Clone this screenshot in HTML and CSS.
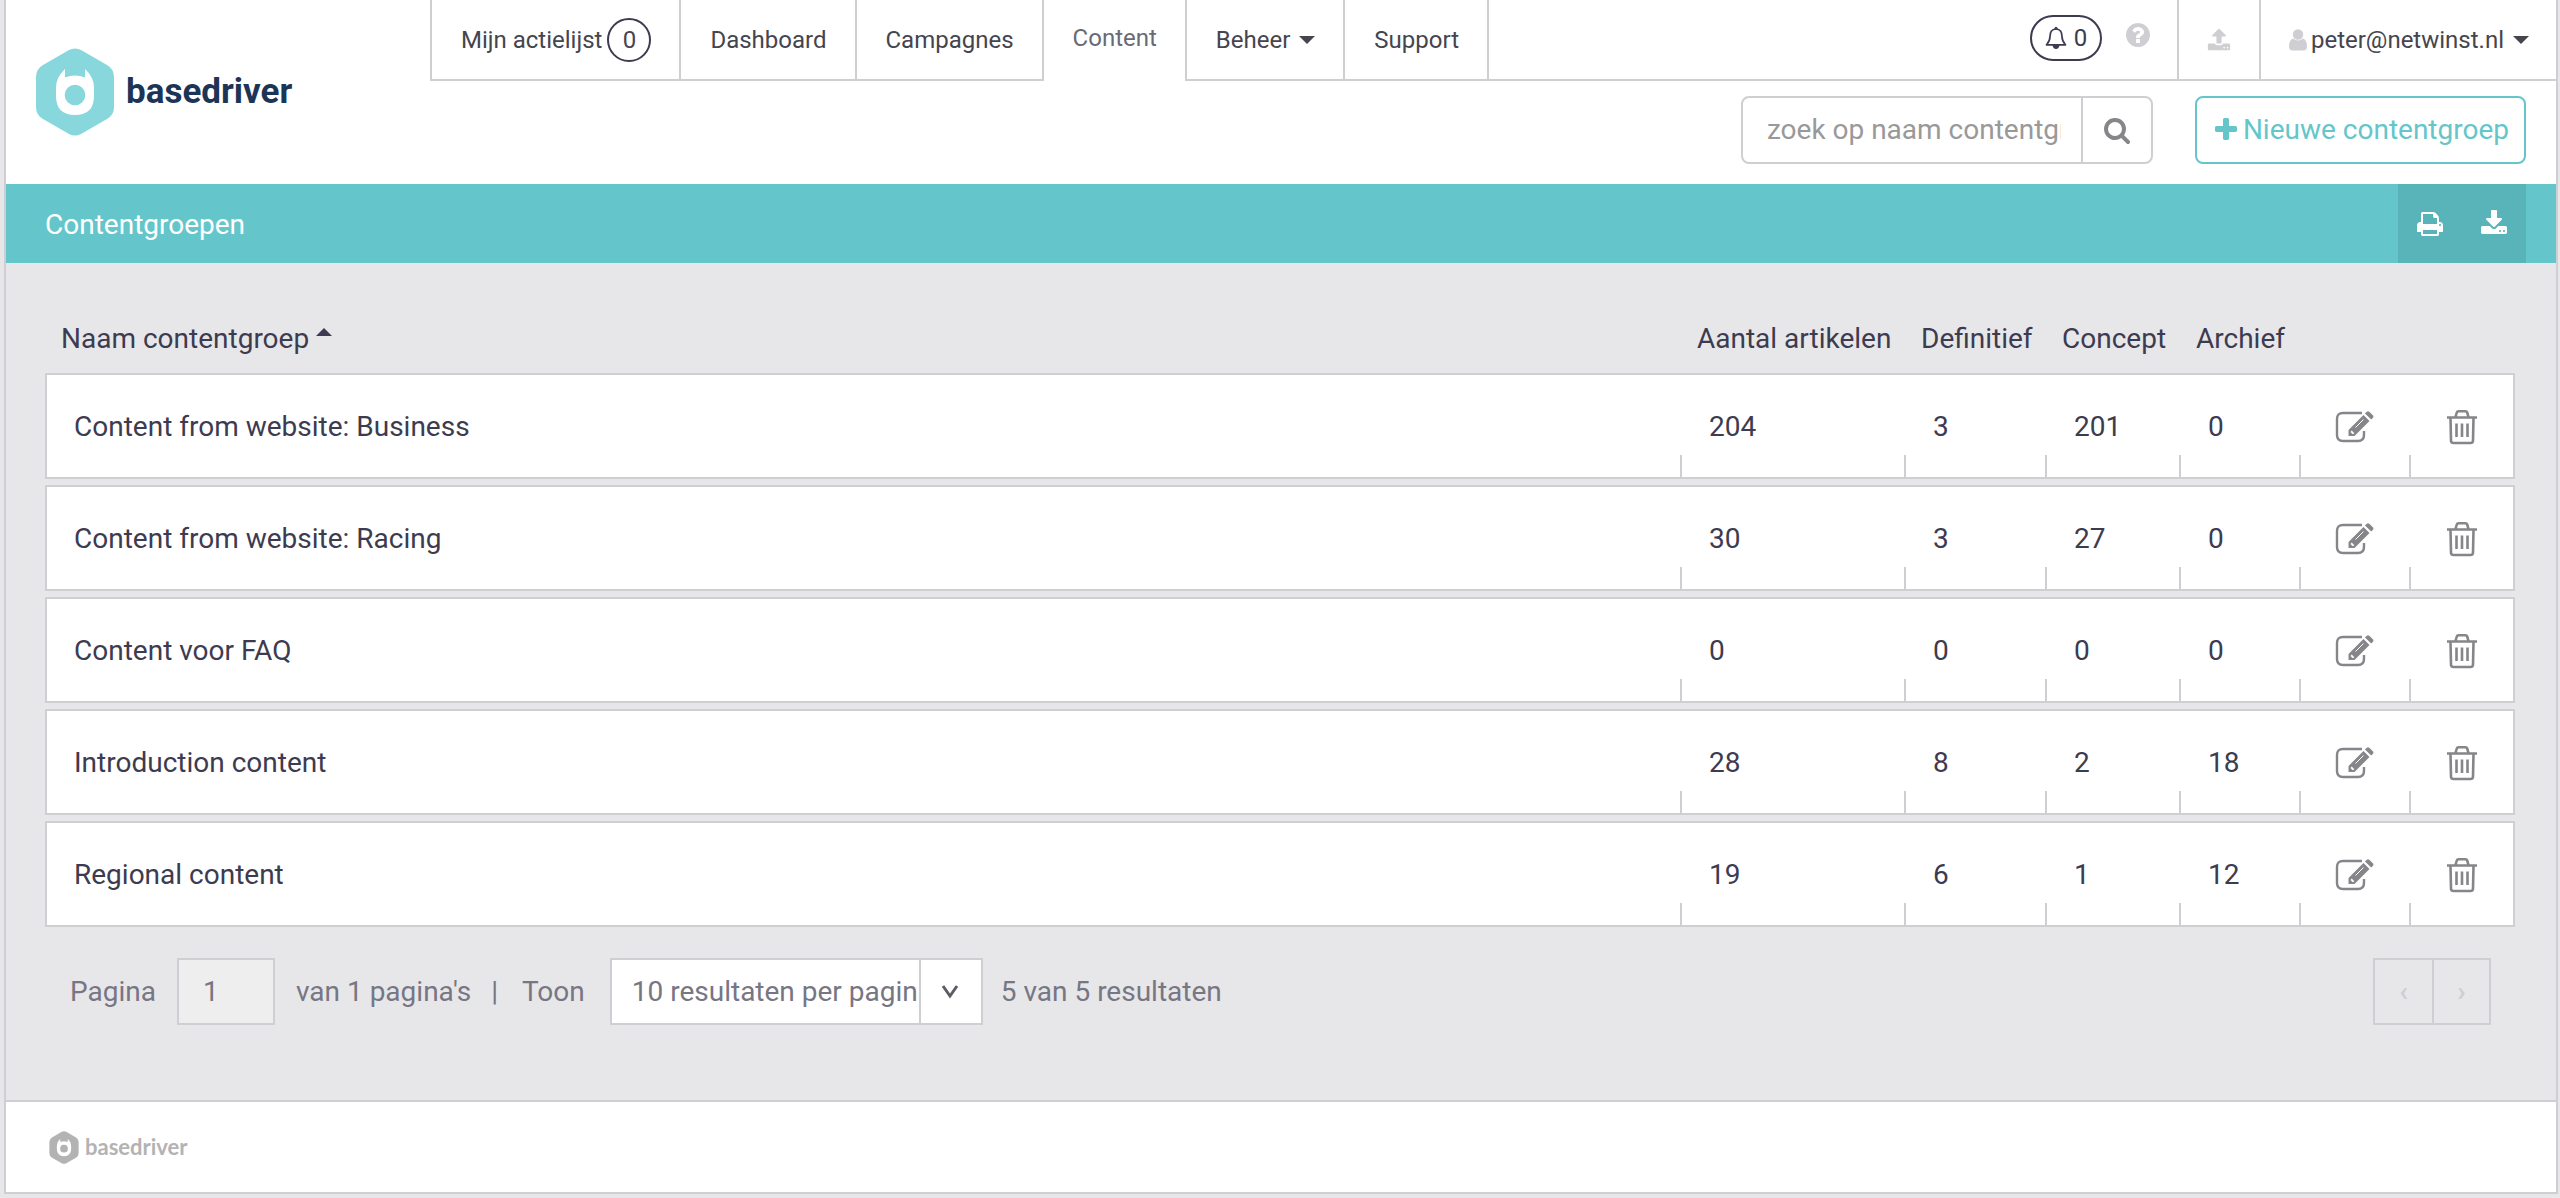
FILE: index.html
```html
<!DOCTYPE html>
<html lang="nl">
<head>
<meta charset="utf-8">
<title>Contentgroepen - basedriver</title>
<link rel="stylesheet" href="styles.css">
</head>
<body>
<svg class="defs" aria-hidden="true">
  <symbol id="plus" viewBox="0 0 1792 1792"><path d="M1600 736v192q0 40-28 68t-68 28h-416v416q0 40-28 68t-68 28h-192q-40 0-68-28t-28-68v-416h-416q-40 0-68-28t-28-68v-192q0-40 28-68t68-28h416v-416q0-40 28-68t68-28h192q40 0 68 28t28 68v416h416q40 0 68 28t28 68z"/></symbol>
  <symbol id="search" viewBox="0 0 1792 1792"><path d="M1216 832q0-185-131.500-316.500t-316.500-131.500-316.500 131.500-131.500 316.500 131.500 316.500 316.500 131.500 316.500-131.500 131.500-316.500zm512 832q0 52-38 90t-90 38q-54 0-90-38l-343-342q-179 124-399 124-143 0-273.500-55.500t-225-150-150-225-55.500-273.500 55.500-273.500 150-225 225-150 273.500-55.500 273.500 55.500 225 150 150 225 55.500 273.500q0 220-124 399l343 343q37 37 37 90z"/></symbol>
  <symbol id="download" viewBox="0 0 1792 1792"><path d="M1344 1344q0-26-19-45t-45-19-45 19-19 45 19 45 45 19 45-19 19-45zm256 0q0-26-19-45t-45-19-45 19-19 45 19 45 45 19 45-19 19-45zm128-224v320q0 40-28 68t-68 28h-1472q-40 0-68-28t-28-68v-320q0-40 28-68t68-28h465l135 136q58 56 136 56t136-56l136-136h464q40 0 68 28t28 68zm-325-569q17 41-14 70l-448 448q-18 19-45 19t-45-19l-448-448q-31-29-14-70 17-39 59-39h256v-448q0-26 19-45t45-19h256q26 0 45 19t19 45v448h256q42 0 59 39z"/></symbol>
  <symbol id="upload" viewBox="0 0 1792 1792"><path d="M1344 1472q0-26-19-45t-45-19-45 19-19 45 19 45 45 19 45-19 19-45zm256 0q0-26-19-45t-45-19-45 19-19 45 19 45 45 19 45-19 19-45zm128-224v320q0 40-28 68t-68 28h-1472q-40 0-68-28t-28-68v-320q0-40 28-68t68-28h427q21 56 70.500 92t110.500 36h256q61 0 110.500-36t70.500-92h427q40 0 68 28t28 68zm-325-648q-17 40-59 40h-256v448q0 26-19 45t-45 19h-256q-26 0-45-19t-19-45v-448h-256q-42 0-59-40-17-39 14-69l448-448q18-19 45-19t45 19l448 448q31 30 14 69z"/></symbol>
  <symbol id="question" viewBox="0 0 1792 1792"><path d="M1024 1376v-192q0-14-9-23t-23-9h-192q-14 0-23 9t-9 23v192q0 14 9 23t23 9h192q14 0 23-9t9-23zm256-672q0-88-55.500-163t-138.500-116-170-41q-243 0-371 213-15 24 8 42l132 100q7 6 19 6 16 0 25-12 53-68 86-92 34-24 86-24 48 0 85.500 26t37.500 59q0 38-20 61t-68 45q-63 28-115.500 86.500t-52.500 125.500v36q0 14 9 23t23 9h192q14 0 23-9t9-23q0-19 21.500-49.500t54.500-49.500q32-18 49-28.500t46-35 44.500-48 28-60.500 12.500-81zm384 192q0 209-103 385.500t-279.500 279.500-385.500 103-385.500-103-279.500-279.500-103-385.500 103-385.500 279.500-279.500 385.500-103 385.500 103 279.500 279.500 103 385.500z"/></symbol>
  <symbol id="print" viewBox="0 0 1792 1792"><path d="M448 1536h896v-256h-896v256zm0-640h896v-384h-160q-40 0-68-28t-28-68v-160h-640v640zm1152 64q0-26-19-45t-45-19-45 19-19 45 19 45 45 19 45-19 19-45zm128 0v416q0 13-9.500 22.500t-22.500 9.500h-224v160q0 40-28 68t-68 28h-960q-40 0-68-28t-28-68v-160h-224q-13 0-22.500-9.500t-9.500-22.500v-416q0-79 56.500-135.500t135.500-56.500h64v-544q0-40 28-68t68-28h672q40 0 88 20t76 48l152 152q28 28 48 76t20 88v256h64q79 0 135.500 56.500t56.500 135.500z"/></symbol>
  <symbol id="user" viewBox="0 0 18 22"><circle cx="9" cy="5.500" r="5.200"/><path d="M4 9.500Q9 13.500 14 9.500Q18 11 18 17.500Q18 21.500 14.500 21.500H3.500Q0 21.500 0 17.500Q0 11 4 9.500z"/></symbol>
  <symbol id="bell" viewBox="0 0 22 24"><path d="M11 3C6.500 3 5 6.500 5 10.500C5 15 3.500 16.500 1.500 18.800H20.500C18.500 16.500 17 15 17 10.500C17 6.500 15.500 3 11 3z" fill="none" stroke="currentColor" stroke-width="1.700" stroke-linejoin="round"/><circle cx="11" cy="2.200" r="1.500"/><path d="M7.500 19H14.500Q14 23 11 23Q8 23 7.500 19z"/></symbol>
  <symbol id="edit" viewBox="0 0 40 32"><path d="M27 2H8Q2 2 2 8V24Q2 30 8 30H23Q29 30 29 24V20" fill="none" stroke="currentColor" stroke-width="2.400"/><path d="M14 18.500L28.500 4L34.500 10L20 24.500Q19.400 25 18.500 25H14Q13.500 25 13.500 24.500V20Q13.500 19 14 18.500z"/><path d="M30 2.500L31.500 1Q33 -.3 34.500 1L37.800 4.300Q39 5.500 37.800 7L36.200 8.500z"/><path d="M16.800 19.600L19.300 22.200L17.800 23.200L15.500 21z" fill="#fff"/><path d="M20.500 16.500L28.500 8.500" stroke="#fff" stroke-width="1"/></symbol>
  <symbol id="trash" viewBox="0 0 32 36"><g fill="none" stroke="currentColor" stroke-width="2.600"><path d="M1 8.500H31M9.500 8L10.800 3.500Q11.200 2.200 12.600 2.200H19.400Q20.800 2.200 21.200 3.500L22.500 8M4.500 9L5 31.500Q5 34 7.500 34H24.500Q27 34 27 31.500L27.500 9"/><path d="M10.500 14.500V28M16 14.500V28M21.500 14.500V28"/></g></symbol>
  <symbol id="mark" viewBox="0 0 78 88"><path d="M33 2Q39-1.200 45 2L71 17Q78 21 78 29V59Q78 67 71 71L45 86Q39 89.200 33 86L7 71Q0 67 0 59V29Q0 21 7 17z"/><path d="M29 21V29.500Q39 25.500 49 29.500V21Q58 29 58 40V48Q58 67 39 67Q20 67 20 48V40Q20 29 29 21z" fill="#fff"/><circle cx="39" cy="47" r="10.300"/></symbol>
</svg>

<div class="frame">
  <header class="header">
    <a class="brand" href="#"><svg class="brand-mark"><use href="#mark"/></svg><span>basedriver</span></a>
    <div class="header-main">
      <div class="topbar">
        <nav class="nav">
          <a class="nav-item" href="#">Mijn actielijst <span class="count">0</span></a>
          <a class="nav-item" href="#">Dashboard</a>
          <a class="nav-item" href="#">Campagnes</a>
          <a class="nav-item active" href="#">Content</a>
          <a class="nav-item" href="#">Beheer <i class="caret"></i></a>
          <a class="nav-item" href="#">Support</a>
        </nav>
        <div class="tools">
          <a class="pill" href="#"><svg class="bell"><use href="#bell"/></svg>0</a>
          <a class="help" href="#" aria-label="Help"><svg class="icon"><use href="#question"/></svg></a>
        </div>
        <a class="nav-item upload" href="#" aria-label="Upload"><svg class="icon-small"><use href="#upload"/></svg></a>
        <a class="nav-item account" href="#"><svg class="user"><use href="#user"/></svg>peter@netwinst.nl <i class="caret"></i></a>
      </div>
      <div class="actions">
        <form class="search">
          <input type="text" aria-label="Zoeken" placeholder="zoek op naam contentgroep">
          <button type="button" aria-label="Zoek"><svg class="icon"><use href="#search"/></svg></button>
        </form>
        <button class="new" type="button"><svg class="icon"><use href="#plus"/></svg>Nieuwe contentgroep</button>
      </div>
    </div>
  </header>

  <div class="titlebar">
    <h1>Contentgroepen</h1>
    <div class="export">
      <a href="#" aria-label="Print"><svg class="icon"><use href="#print"/></svg></a>
      <a href="#" aria-label="Download"><svg class="icon"><use href="#download"/></svg></a>
    </div>
  </div>

  <main class="content">
    <table class="groups">
      <colgroup><col><col class="c-total"><col class="c-final"><col class="c-draft"><col class="c-archive"><col class="c-edit"><col class="c-delete"></colgroup>
      <thead>
        <tr><th>Naam contentgroep <i class="sort"></i></th><th>Aantal artikelen</th><th>Definitief</th><th>Concept</th><th>Archief</th><th></th><th></th></tr>
      </thead>
      <tbody>
        <tr><td>Content from website: Business</td><td>204</td><td>3</td><td>201</td><td>0</td><td class="act"><a href="#" aria-label="Bewerken"><svg class="edit"><use href="#edit"/></svg></a></td><td class="act"><a href="#" aria-label="Verwijderen"><svg class="trash"><use href="#trash"/></svg></a></td></tr>
        <tr><td>Content from website: Racing</td><td>30</td><td>3</td><td>27</td><td>0</td><td class="act"><a href="#" aria-label="Bewerken"><svg class="edit"><use href="#edit"/></svg></a></td><td class="act"><a href="#" aria-label="Verwijderen"><svg class="trash"><use href="#trash"/></svg></a></td></tr>
        <tr><td>Content voor FAQ</td><td>0</td><td>0</td><td>0</td><td>0</td><td class="act"><a href="#" aria-label="Bewerken"><svg class="edit"><use href="#edit"/></svg></a></td><td class="act"><a href="#" aria-label="Verwijderen"><svg class="trash"><use href="#trash"/></svg></a></td></tr>
        <tr><td>Introduction content</td><td>28</td><td>8</td><td>2</td><td>18</td><td class="act"><a href="#" aria-label="Bewerken"><svg class="edit"><use href="#edit"/></svg></a></td><td class="act"><a href="#" aria-label="Verwijderen"><svg class="trash"><use href="#trash"/></svg></a></td></tr>
        <tr><td>Regional content</td><td>19</td><td>6</td><td>1</td><td>12</td><td class="act"><a href="#" aria-label="Bewerken"><svg class="edit"><use href="#edit"/></svg></a></td><td class="act"><a href="#" aria-label="Verwijderen"><svg class="trash"><use href="#trash"/></svg></a></td></tr>
      </tbody>
    </table>

    <div class="pagination">
      <label for="page">Pagina</label>
      <input class="page" id="page" type="text" value="1" disabled>
      <span>van 1 pagina's</span>
      <span class="bar">|</span>
      <label for="size">Toon</label>
      <div class="size">
        <select id="size"><option>10 resultaten per pagina</option><option>25 resultaten per pagina</option></select>
        <svg class="chevron" viewBox="0 0 18 16"><path d="M2 2L9 12L16 2" fill="none" stroke="currentColor" stroke-width="3"/></svg>
      </div>
      <span>5 van 5 resultaten</span>
      <div class="pager"><button type="button" disabled>‹</button><button type="button" disabled>›</button></div>
    </div>
  </main>

  <footer class="footer"><svg class="footer-mark"><use href="#mark"/></svg><span>basedriver</span></footer>
</div>
</body>
</html>
```
FILE: styles.css
```css
* { box-sizing: border-box; }
body { margin: 0; background: #e7e7e9; color: #3d3b50; font: 28px/32px Roboto, sans-serif; }
a { color: inherit; text-decoration: none; }
button, input, select { margin: 0; font: inherit; color: inherit; border-radius: 0; }
svg { display: block; flex: none; fill: currentColor; }
.defs { position: absolute; width: 0; height: 0; }
.icon { width: 28px; height: 28px; }
.icon-small { width: 24px; height: 24px; }

.frame { margin: 0 2px 4px 4px; border: 2px solid #cfced3; border-top: 0; }

/* Header */
.header { display: flex; height: 184px; background: #fff; }
.brand { display: flex; flex: none; gap: 12px; align-items: center; width: 424px; padding-left: 30px; color: #1c3557; font-size: 35px; font-weight: 700; }
.brand-mark { width: 78px; height: 88px; color: #87d7dc; }
.header-main { flex: 1; }
.topbar { display: flex; height: 81px; color: #45454e; font-size: 24px; line-height: 28px; }
.nav { display: flex; }
.nav-item { display: flex; align-items: center; padding: 0 28px 0 29px; border: solid #cfced3; border-width: 0 0 2px 2px; white-space: nowrap; }
.nav-item.active { padding-bottom: 6px; border-bottom: 0; color: #6a6a75; }
.count { display: grid; place-items: center; width: 44px; height: 44px; margin-left: 5px; border: 2px solid #3d3b50; border-radius: 50%; }
.caret { margin-left: 9px; border: solid transparent; border-width: 8px 8px 0; border-top-color: currentColor; }
.tools { display: flex; flex: 1; justify-content: flex-end; gap: 22px; padding: 15px 25px 0 0; border: solid #cfced3; border-width: 0 0 2px 2px; }
.pill { display: flex; gap: 7px; align-items: center; justify-content: center; width: 72px; height: 46px; border: 2px solid #3d3b50; border-radius: 23px; color: #3d3b50; }
.bell { width: 22px; height: 24px; }
.help { padding-top: 6px; color: #cfced3; }
.upload { padding: 0 28px; color: #cfced3; }
.account { padding: 0 27px 0 28px; }
.user { width: 18px; height: 22px; margin-right: 4px; color: #cfced3; }

.actions { display: flex; justify-content: flex-end; gap: 42px; padding: 15px 30px 0 0; }
.search { display: flex; width: 412px; height: 68px; border: 2px solid #cfced3; border-radius: 8px; color: #85858a; }
.search input { flex: 1; min-width: 0; padding: 0 20px 0 24px; border: 0; background: none; }
.search input::placeholder { color: #999; }
.search button { display: grid; place-items: center; width: 70px; padding: 0; border: 0; border-left: 2px solid #cfced3; background: none; }
.new { display: flex; gap: 3px; align-items: center; height: 68px; padding: 0 15px; border: 2px solid #64c6ca; border-radius: 8px; background: #fff; color: #64c6ca; white-space: nowrap; }

/* Title bar */
.titlebar { display: flex; align-items: center; justify-content: space-between; height: 79px; padding: 0 30px 0 39px; background: #64c6ca; color: #fff; }
.titlebar h1 { margin: 0; padding-top: 2px; font: inherit; }
.export { display: flex; align-self: stretch; background: #58b4b8; }
.export a { display: grid; place-items: center; width: 64px; }

/* Table */
.content { padding: 41px 41px 75px 39px; }
.groups { width: 100%; border-spacing: 0 6px; table-layout: fixed; }
.c-total { width: 224px; }
.c-final { width: 141px; }
.c-draft { width: 134px; }
.c-archive { width: 120px; }
.c-edit { width: 110px; }
.c-delete { width: 106px; }
.groups th { height: 57px; padding: 0 17px; font-weight: 400; text-align: left; white-space: nowrap; }
.groups th:first-child { padding-left: 16px; }
.groups td { height: 106px; padding: 2px 28px 0 29px; border: solid #cfced3; border-width: 2px 0; background: linear-gradient(#cfced3, #cfced3) 0 100% / 2px 22px no-repeat padding-box #fff; }
.groups td:first-child { padding-left: 27px; border-left-width: 2px; background: #fff; }
.groups td:last-child { border-right-width: 2px; }
.groups td.act { padding: 2px 0 0 2px; color: #85858a; }
.act a { display: grid; place-items: center; }
.edit { width: 40px; height: 32px; }
.trash { width: 32px; height: 36px; }
.sort { display: inline-block; border: solid transparent; border-width: 0 8px 8px; border-bottom-color: currentColor; vertical-align: 12px; }

/* Pagination */
.pagination { display: flex; align-items: center; margin-top: 25px; padding: 0 24px 0 25px; color: #777684; }
.pagination label, .pagination span { white-space: nowrap; }
.page { width: 98px; height: 67px; margin: 0 21px; padding: 0 24px; border: 2px solid #cfced3; background: #eee; }
.bar { margin: 0 24px 0 20px; }
.size { display: grid; width: 373px; height: 67px; margin: 0 18px 0 25px; }
.size select { grid-area: 1 / 1; width: 100%; padding: 0 62px 0 20px; border: 2px solid #cfced3; background: linear-gradient(#cfced3, #cfced3) right 60px top / 2px 100% no-repeat #fff; appearance: none; }
.chevron { grid-area: 1 / 1; place-self: center end; width: 18px; height: 16px; margin-right: 24px; color: #5c5c63; pointer-events: none; }
.pager { display: flex; margin-left: auto; }
.pager button { width: 61px; height: 67px; padding: 0; border: 2px solid #cfced3; background: none; color: #cfced3; font-weight: 700; }
.pager button + button { border-left: 0; width: 57px; }

/* Footer */
.footer { display: flex; gap: 6px; align-items: center; height: 92px; padding-left: 43px; border-top: 2px solid #cfced3; background: #fff; color: #b3b3b3; font: 700 22px/24px Lato, sans-serif; }
.footer-mark { width: 30px; height: 33px; }
```
